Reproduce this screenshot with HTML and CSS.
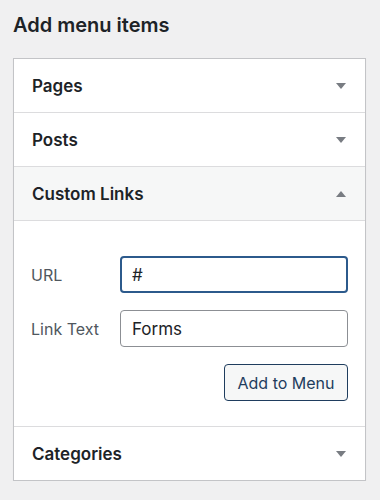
FILE: index.html
```html
<!DOCTYPE html>
<html lang="en">
<head>
    <meta charset="UTF-8">
    <meta name="viewport" content="width=device-width, initial-scale=1.0">
    <title>Add menu items</title>
    <link rel="stylesheet" href="styles.css">
</head>
<body>

<h2 class="title">Add menu items</h2>

<div class="panel">
    <div class="section">
        <div class="section-head">
            <span>Pages</span>
            <span class="arrow down"></span>
        </div>
    </div>
    <div class="section">
        <div class="section-head">
            <span>Posts</span>
            <span class="arrow down"></span>
        </div>
    </div>
    <div class="section open">
        <div class="section-head">
            <span>Custom Links</span>
            <span class="arrow up"></span>
        </div>
        <div class="section-body">
            <div class="field">
                <label for="url">URL</label>
                <input type="text" id="url" class="focused" value="#">
            </div>
            <div class="field">
                <label for="linkText">Link Text</label>
                <input type="text" id="linkText" value="Forms">
            </div>
            <div class="actions">
                <button class="btn">Add to Menu</button>
            </div>
        </div>
    </div>
    <div class="section">
        <div class="section-head">
            <span>Categories</span>
            <span class="arrow down"></span>
        </div>
    </div>
</div>

</body>
</html>
```

FILE: styles.css
```css
body {
    margin: 0;
    padding: 0 14px 0 13px;
    background: #f0f0f1;
    font-family: 'Inter', 'Noto Sans', sans-serif;
    color: #1d2327;
}
.title {
    font-size: 20px;
    font-weight: 600;
    margin: 0;
    padding-top: 13px;
    height: 45px; /* panel starts at 58 */
    line-height: 24px;
}
.panel {
    background: white;
    border: 1px solid #c3c4c7;
    box-shadow: 0 1px 1px rgba(0, 0, 0, 0.06);
}
.section {
    border-bottom: 1px solid #dcdcde;
}
.section:last-child {
    border-bottom: none;
}
.section-head {
    height: 53px;
    display: flex;
    align-items: center;
    justify-content: space-between;
    padding: 0 19px 0 18px;
    font-size: 17px;
    font-weight: 600;
}
.section.open .section-head {
    background: #f6f7f7;
    border-bottom: 1px solid #dcdcde;
}
.arrow {
    width: 0;
    height: 0;
    border-left: 5px solid transparent;
    border-right: 5px solid transparent;
}
.arrow.down {
    border-top: 6px solid #787c82;
}
.arrow.up {
    border-bottom: 6px solid #787c82;
}
.section-body {
    padding: 35px 17px 25px 17px;
}
.field {
    display: flex;
    align-items: center;
    margin-bottom: 17px;
}
.field label {
    flex: 0 0 89px;
    font-size: 16px;
    color: #50575e;
}
.field input {
    flex: 1;
    min-width: 0;
    box-sizing: border-box;
    height: 37px;
    border: 1px solid #8c8f94;
    border-radius: 4px;
    padding: 0 11px;
    font-family: inherit;
    font-size: 17px;
    color: #1d2327;
    outline: none;
}
.field input.focused {
    border: 2px solid #2c5a8c;
    padding: 0 10px;
}
.actions {
    display: flex;
    justify-content: flex-end;
}
.btn {
    height: 37px;
    width: 124px;
    background: #f6f7f7;
    border: 1px solid #1f3d5e;
    border-radius: 4px;
    color: #1f3d5e;
    font-family: inherit;
    font-size: 16px;
    cursor: pointer;
}
```
